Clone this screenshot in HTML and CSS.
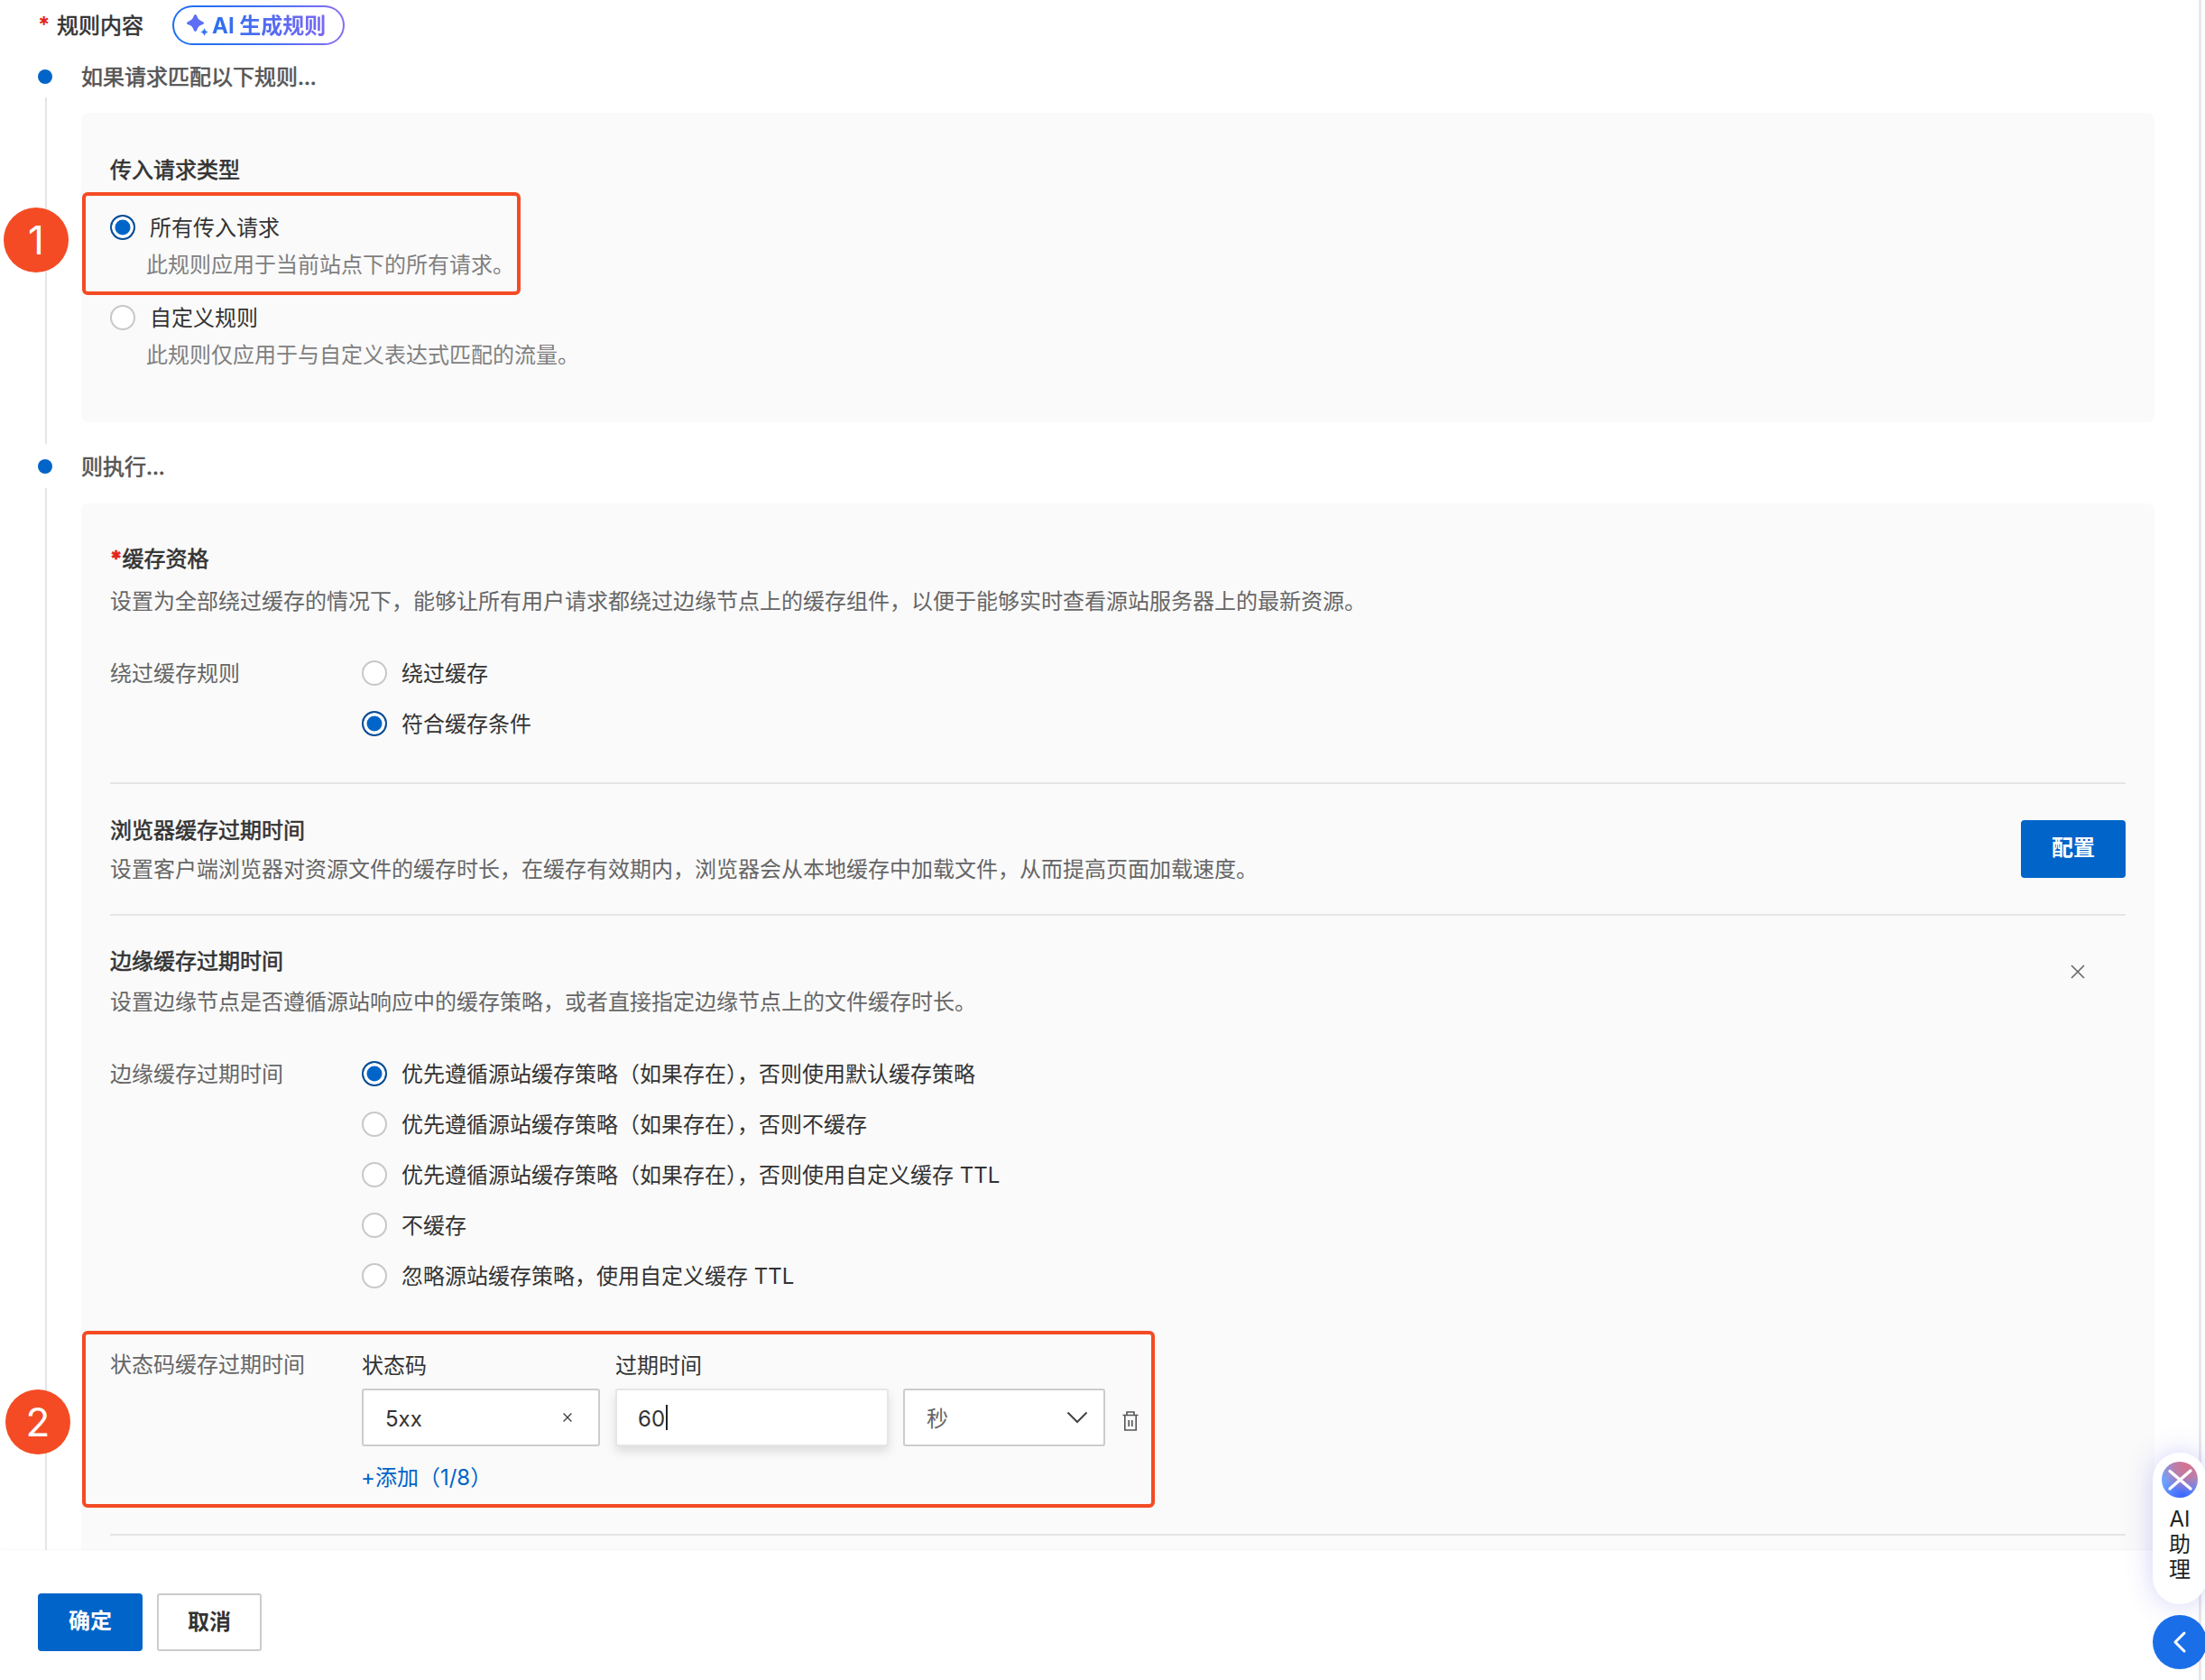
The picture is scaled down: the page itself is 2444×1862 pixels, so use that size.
FILE: index.html
```html
<!DOCTYPE html>
<html lang="zh-CN">
<head>
<meta charset="utf-8">
<title>规则内容</title>
<link rel="stylesheet" href="styles.css">
</head>
<body>
<div class="page">
  <div class="app">
    <main class="main">
      <div class="form-title">
        <span class="req">*</span>
        <span class="form-title-text">规则内容</span>
        <button class="ai-btn" type="button">
          <svg class="ai-spark" viewBox="0 0 26 26" width="26" height="26" aria-hidden="true">
            <path d="M10.5 1C11.5 1 12 2 12.6 3.5 13.5 6 15 7.5 17.5 8.4 19 9 20 9.5 20 10.5 20 11.5 19 12 17.5 12.6 15 13.5 13.5 15 12.6 17.5 12 19 11.5 20 10.5 20 9.5 20 9 19 8.4 17.5 7.5 15 6 13.5 3.5 12.6 2 12 1 11.5 1 10.5 1 9.5 2 9 3.5 8.4 6 7.5 7.5 6 8.4 3.5 9 2 9.5 1 10.5 1Z" fill="#5f6ef6"/>
            <path d="M20.5 16C21 18.5 22.5 20 25 20.5 22.5 21 21 22.5 20.5 25 20 22.5 18.5 21 16 20.5 18.5 20 20 18.5 20.5 16Z" fill="#2f78f0"/>
          </svg>
          <span class="ai-btn-text">AI 生成规则</span>
        </button>
      </div>

      <section class="step step-first">
        <div class="rail"><span class="dot"></span><span class="rail-line"></span></div>
        <div class="step-body">
          <div class="step-head">如果请求匹配以下规则...</div>
          <div class="panel panel-match">
            <div class="field-title">传入请求类型</div>
            <div class="options">
              <div class="option">
                <div class="radio-row"><span class="radio checked"></span><span class="radio-text">所有传入请求</span></div>
                <div class="option-desc">此规则应用于当前站点下的所有请求。</div>
              </div>
              <div class="option">
                <div class="radio-row"><span class="radio"></span><span class="radio-text">自定义规则</span></div>
                <div class="option-desc">此规则仅应用于与自定义表达式匹配的流量。</div>
              </div>
            </div>
            <div class="mark-box mark-box-one"></div>
            <div class="badge badge-one">1</div>
          </div>
        </div>
      </section>

      <section class="step step-second">
        <div class="rail"><span class="dot"></span><span class="rail-line"></span></div>
        <div class="step-body">
          <div class="step-head">则执行...</div>
          <div class="panel panel-action">
            <div class="section section-cache">
              <div class="field-title"><span class="req-small">*</span>缓存资格</div>
              <div class="field-desc field-desc-wide">设置为全部绕过缓存的情况下，能够让所有用户请求都绕过边缘节点上的缓存组件，以便于能够实时查看源站服务器上的最新资源。</div>
              <div class="form-row form-row-cache">
                <div class="row-label">绕过缓存规则</div>
                <div class="radio-list">
                  <div class="radio-row"><span class="radio"></span><span class="radio-text">绕过缓存</span></div>
                  <div class="radio-row"><span class="radio checked"></span><span class="radio-text">符合缓存条件</span></div>
                </div>
              </div>
            </div>

            <div class="section section-browser">
              <div>
                <div class="field-title">浏览器缓存过期时间</div>
                <div class="field-desc">设置客户端浏览器对资源文件的缓存时长，在缓存有效期内，浏览器会从本地缓存中加载文件，从而提高页面加载速度。</div>
              </div>
              <button class="btn btn-primary btn-config" type="button">配置</button>
            </div>

            <div class="section section-edge">
              <div class="edge-head">
                <div>
                  <div class="field-title">边缘缓存过期时间</div>
                  <div class="field-desc field-desc-mid">设置边缘节点是否遵循源站响应中的缓存策略，或者直接指定边缘节点上的文件缓存时长。</div>
                </div>
                <svg class="close-icon" viewBox="0 0 16 16" width="16" height="16" aria-hidden="true"><path d="M1 1 15 15M15 1 1 15" stroke="#666" stroke-width="1.6" fill="none"/></svg>
              </div>
              <div class="form-row form-row-edge">
                <div class="row-label">边缘缓存过期时间</div>
                <div class="radio-list">
                  <div class="radio-row"><span class="radio checked"></span><span class="radio-text">优先遵循源站缓存策略（如果存在），否则使用默认缓存策略</span></div>
                  <div class="radio-row"><span class="radio"></span><span class="radio-text">优先遵循源站缓存策略（如果存在），否则不缓存</span></div>
                  <div class="radio-row"><span class="radio"></span><span class="radio-text">优先遵循源站缓存策略（如果存在），否则使用自定义缓存 TTL</span></div>
                  <div class="radio-row"><span class="radio"></span><span class="radio-text">不缓存</span></div>
                  <div class="radio-row"><span class="radio"></span><span class="radio-text">忽略源站缓存策略，使用自定义缓存 TTL</span></div>
                </div>
              </div>
              <div class="form-row form-row-status">
                <div class="row-label">状态码缓存过期时间</div>
                <div class="status-body">
                  <div class="status-heads">
                    <span class="status-head-code">状态码</span>
                    <span>过期时间</span>
                  </div>
                  <div class="status-inputs">
                    <div class="input input-code"><span class="input-text">5xx</span>
                      <svg viewBox="0 0 10 10" width="10" height="10" aria-hidden="true"><path d="M.6.6 9.4 9.4M9.4.6.6 9.4" stroke="#444" stroke-width="1.4" fill="none"/></svg>
                    </div>
                    <div class="input input-time"><span class="input-text">60</span><i class="caret"></i></div>
                    <div class="input input-unit"><span class="input-text unit-text">秒</span>
                      <svg viewBox="0 0 24 14" width="24" height="14" aria-hidden="true"><path d="M1.500 1.500 12 12 22.500 1.500" stroke="#444" stroke-width="2" fill="none"/></svg>
                    </div>
                    <svg class="trash" viewBox="0 0 18 22" width="18" height="22" aria-hidden="true">
                      <path d="M5 4.500V1h8v3.500M.5 4.500h17M2.800 4.500V21h12.400V4.500M7.200 10v7M10.800 10v7" stroke="#555" stroke-width="1.6" fill="none"/>
                    </svg>
                  </div>
                  <div class="add-link">+添加（1/8）</div>
                </div>
                <div class="mark-box mark-box-two"></div>
                <div class="badge badge-two">2</div>
              </div>
            </div>
            <div class="section section-end"></div>
          </div>
        </div>
      </section>
    </main>

    <footer class="footer">
      <button class="btn btn-primary" type="button">确定</button>
      <button class="btn btn-default" type="button">取消</button>
    </footer>
  </div>
  <div class="scroll-track"></div>

  <aside class="assistant">
    <div class="assistant-pill">
      <span class="assistant-icon">
        <svg viewBox="0 0 40 40" width="40" height="40" aria-hidden="true"><path d="M9 30 32 10M9 10.500 32 30" stroke="#fff" stroke-width="3.4" stroke-linecap="round" fill="none"/></svg>
      </span>
      <span class="assistant-text">AI<br>助<br>理</span>
    </div>
    <div class="assistant-toggle">
      <svg viewBox="0 0 18 26" width="18" height="26" aria-hidden="true"><path d="M14 3 4 13 14 23" stroke="#fff" stroke-width="3" stroke-linecap="round" stroke-linejoin="round" fill="none"/></svg>
    </div>
  </aside>
</div>
</body>
</html>
```

FILE: styles.css
```css
* { box-sizing: border-box; }
html, body { margin: 0; padding: 0; background: #fff; }
body {
  font-family: "Inter", "Noto Sans CJK SC", sans-serif;
  font-size: 24px;
  line-height: 40px;
  color: #333;
}
button { font: inherit; }

.page {
  position: relative;
  display: flex;
  width: 2444px;
  height: 1862px;
  overflow: hidden;
}
.app {
  display: flex;
  flex-direction: column;
  width: 2437px;
  flex: none;
}
.scroll-track {
  width: 3px;
  flex: none;
  background: #e8e8e8;
}

.main {
  flex: 1;
  min-height: 0;
  overflow: hidden;
  padding-left: 42px;
}

.form-title {
  display: flex;
  align-items: center;
  height: 56px;
}
.req { color: #e2231a; width: 21px; font-weight: 700; }
.form-title-text {
  padding-top: 1px;
  color: #333;
  -webkit-text-stroke: .6px currentColor;
}
.ai-btn {
  display: inline-flex;
  align-items: center;
  width: 191px;
  height: 44px;
  margin-left: 32px;
  padding: 0 0 0 13px;
  border: 2px solid transparent;
  border-radius: 22px;
  background:
    linear-gradient(#fff, #fff) padding-box,
    linear-gradient(90deg, #1d6ff0 0%, #3f70f2 55%, #8b6cf2 100%) border-box;
  line-height: 38px;
}
.ai-spark { flex: none; }
.ai-btn-text {
  margin-left: 3px;
  padding-top: 1px;
  white-space: nowrap;
  background: linear-gradient(90deg, #2a70f0, #7a68f2);
  -webkit-background-clip: text;
  background-clip: text;
  color: transparent;
  -webkit-text-fill-color: transparent;
  font-weight: 700;
}

.step { display: flex; }
.rail {
  width: 48px;
  flex: none;
  display: flex;
  flex-direction: column;
  align-items: flex-start;
}
.dot {
  width: 16px;
  height: 16px;
  margin-top: 21px;
  border-radius: 50%;
  background: #0064c8;
  flex: none;
}
.rail-line {
  width: 2px;
  flex: 1;
  margin: 15px 0 0 8px;
  background: #e5e5e5;
}
.step-first .rail-line { margin-bottom: -24px; }
.step-second .rail-line { margin-top: 16px; }

.step-body { flex: 1; min-width: 0; }
.step-first { padding-bottom: 20px; }
.step-head {
  height: 58px;
  line-height: 60px;
  color: #555;
  -webkit-text-stroke: .6px currentColor;
}
.panel {
  position: relative;
  width: 2298px;
  background: #fafafa;
  border-radius: 8px;
  padding: 0 32px;
}
.panel-match { height: 343px; margin-top: 11px; padding-top: 45px; }
.panel-action { margin-top: 12px; padding-top: 43px; }

.field-title {
  height: 36px;
  line-height: 38px;
  color: #333;
  -webkit-text-stroke: .6px currentColor;
}
.req-small { color: #e2231a; font-weight: 700; }
.options { display: flex; flex-direction: column; gap: 19px; margin-top: 26px; }
.radio-row { display: flex; align-items: center; height: 40px; gap: 16px; }
.radio-text { color: #333; white-space: nowrap; padding-top: 2px; }
.option-desc { margin-left: 40px; height: 41px; line-height: 43px; color: #808080; }
.radio {
  flex: none;
  width: 28px;
  height: 28px;
  border: 2px solid #c8c8c8;
  border-radius: 50%;
  background: #fff;
}
.radio.checked {
  border-color: #0a4d96;
  background: #0064c8;
  box-shadow: inset 0 0 0 3.5px #fff;
}

.mark-box {
  position: absolute;
  border: 4px solid #f44b24;
  border-radius: 6px;
  pointer-events: none;
}
.mark-box-one { left: 1px; top: 88px; width: 486px; height: 114px; }
.mark-box-two { left: -31px; top: -17px; width: 1189px; height: 196px; }
.badge {
  position: absolute;
  width: 72px;
  height: 72px;
  border-radius: 50%;
  background: #f44b24;
  color: #fff;
  font-family: "Inter", sans-serif;
  font-size: 44px;
  line-height: 72px;
  text-align: center;
}
.badge-one { left: -86px; top: 105px; }
.badge-two { left: -116px; top: 48px; }

.section { border-top: 2px solid #e5e5e5; }
.section-cache { border-top: 0; height: 266px; }
.field-desc { margin-top: 5px; color: #666; white-space: nowrap; height: 40px; line-height: 41px; }
.field-desc-wide { margin-top: 9px; }
.field-desc-mid { margin-top: 7px; }
.form-row { display: flex; position: relative; }
.form-row-cache { margin-top: 40px; }
.row-label { width: 279px; flex: none; color: #666; height: 40px; line-height: 41px; }
.radio-list { display: flex; flex-direction: column; gap: 16px; }

.section-browser {
  display: flex;
  justify-content: space-between;
  align-items: center;
  padding: 33px 0 30px;
}
.btn-config { margin-bottom: 3px; }
.section-edge { padding-top: 32px; padding-bottom: 42px; }
.edge-head { display: flex; justify-content: space-between; align-items: flex-start; }
.close-icon { margin: 22px 45px 0 0; }
.form-row-edge { margin-top: 40px; }
.form-row-status { margin-top: 58px; }
.status-body { flex: 1; }
.status-heads { display: flex; height: 42px; line-height: 44px; color: #333; }
.status-head-code { width: 281px; }
.status-inputs { display: flex; align-items: center; margin-top: 5px; }
.input {
  display: flex;
  align-items: center;
  justify-content: space-between;
  height: 64px;
  background: #fff;
  border: 2px solid #ccc;
  border-radius: 3px;
  color: #333;
}
.input-text { padding-top: 3px; }
.input-code { width: 264px; padding: 0 29px 0 24px; }
.input-time {
  width: 303px;
  margin-left: 17px;
  padding: 0 0 0 23px;
  justify-content: flex-start;
  border-color: #e6e6e6;
  box-shadow: 0 6px 12px rgba(0, 0, 0, .12);
}
.caret { width: 2px; height: 28px; background: #222; margin-left: 1px; }
.input-unit { width: 224px; margin-left: 16px; padding: 0 17px 0 24px; color: #666; }
.trash { margin: 8px 0 0 19px; flex: none; }
.add-link { margin-top: 14px; margin-left: -1px; color: #0064c8; height: 41px; line-height: 41px; }

.section-end { height: 40px; }

.footer {
  flex: none;
  display: flex;
  gap: 16px;
  height: 144px;
  padding: 48px 0 0 42px;
  background: #fff;
  position: relative;
  box-shadow: 0 -1px 2px rgba(0, 0, 0, .03);
}
.btn {
  width: 116px;
  height: 64px;
  border-radius: 4px;
  font-weight: 700;
  line-height: 60px;
  padding: 0 0 2px;
  flex: none;
}
.btn-primary { background: #0064c8; border: 0; color: #fff; }
.btn-default { background: #fff; border: 2px solid #ccc; color: #333; border-radius: 3px; }

.assistant {
  position: absolute;
  left: 2386px;
  top: 1610px;
  width: 60px;
}
.assistant-pill {
  display: flex;
  flex-direction: column;
  align-items: center;
  width: 60px;
  height: 168px;
  padding-top: 10px;
  border-radius: 30px;
  background: #fff;
  box-shadow: 0 0 30px rgba(90, 90, 230, .28);
}
.assistant-icon {
  display: block;
  flex: none;
  width: 40px;
  height: 40px;
  border-radius: 50%;
  background:
    radial-gradient(circle at 72% 8%, #d8708a 0%, rgba(216,112,138,.75) 30%, rgba(216,112,138,0) 68%),
    radial-gradient(circle at 58% 100%, #3a62ff 0%, rgba(58,98,255,0) 60%),
    #6fa4ff;
  margin-bottom: 10px;
}
.assistant-icon svg { display: block; }
.assistant-text {
  display: block;
  font-size: 24px;
  line-height: 28px;
  text-align: center;
  color: #222;
}
.assistant-toggle {
  display: flex;
  align-items: center;
  justify-content: center;
  width: 60px;
  height: 60px;
  margin-top: 12px;
  border-radius: 50%;
  background: #1a6fe8;
}
```
